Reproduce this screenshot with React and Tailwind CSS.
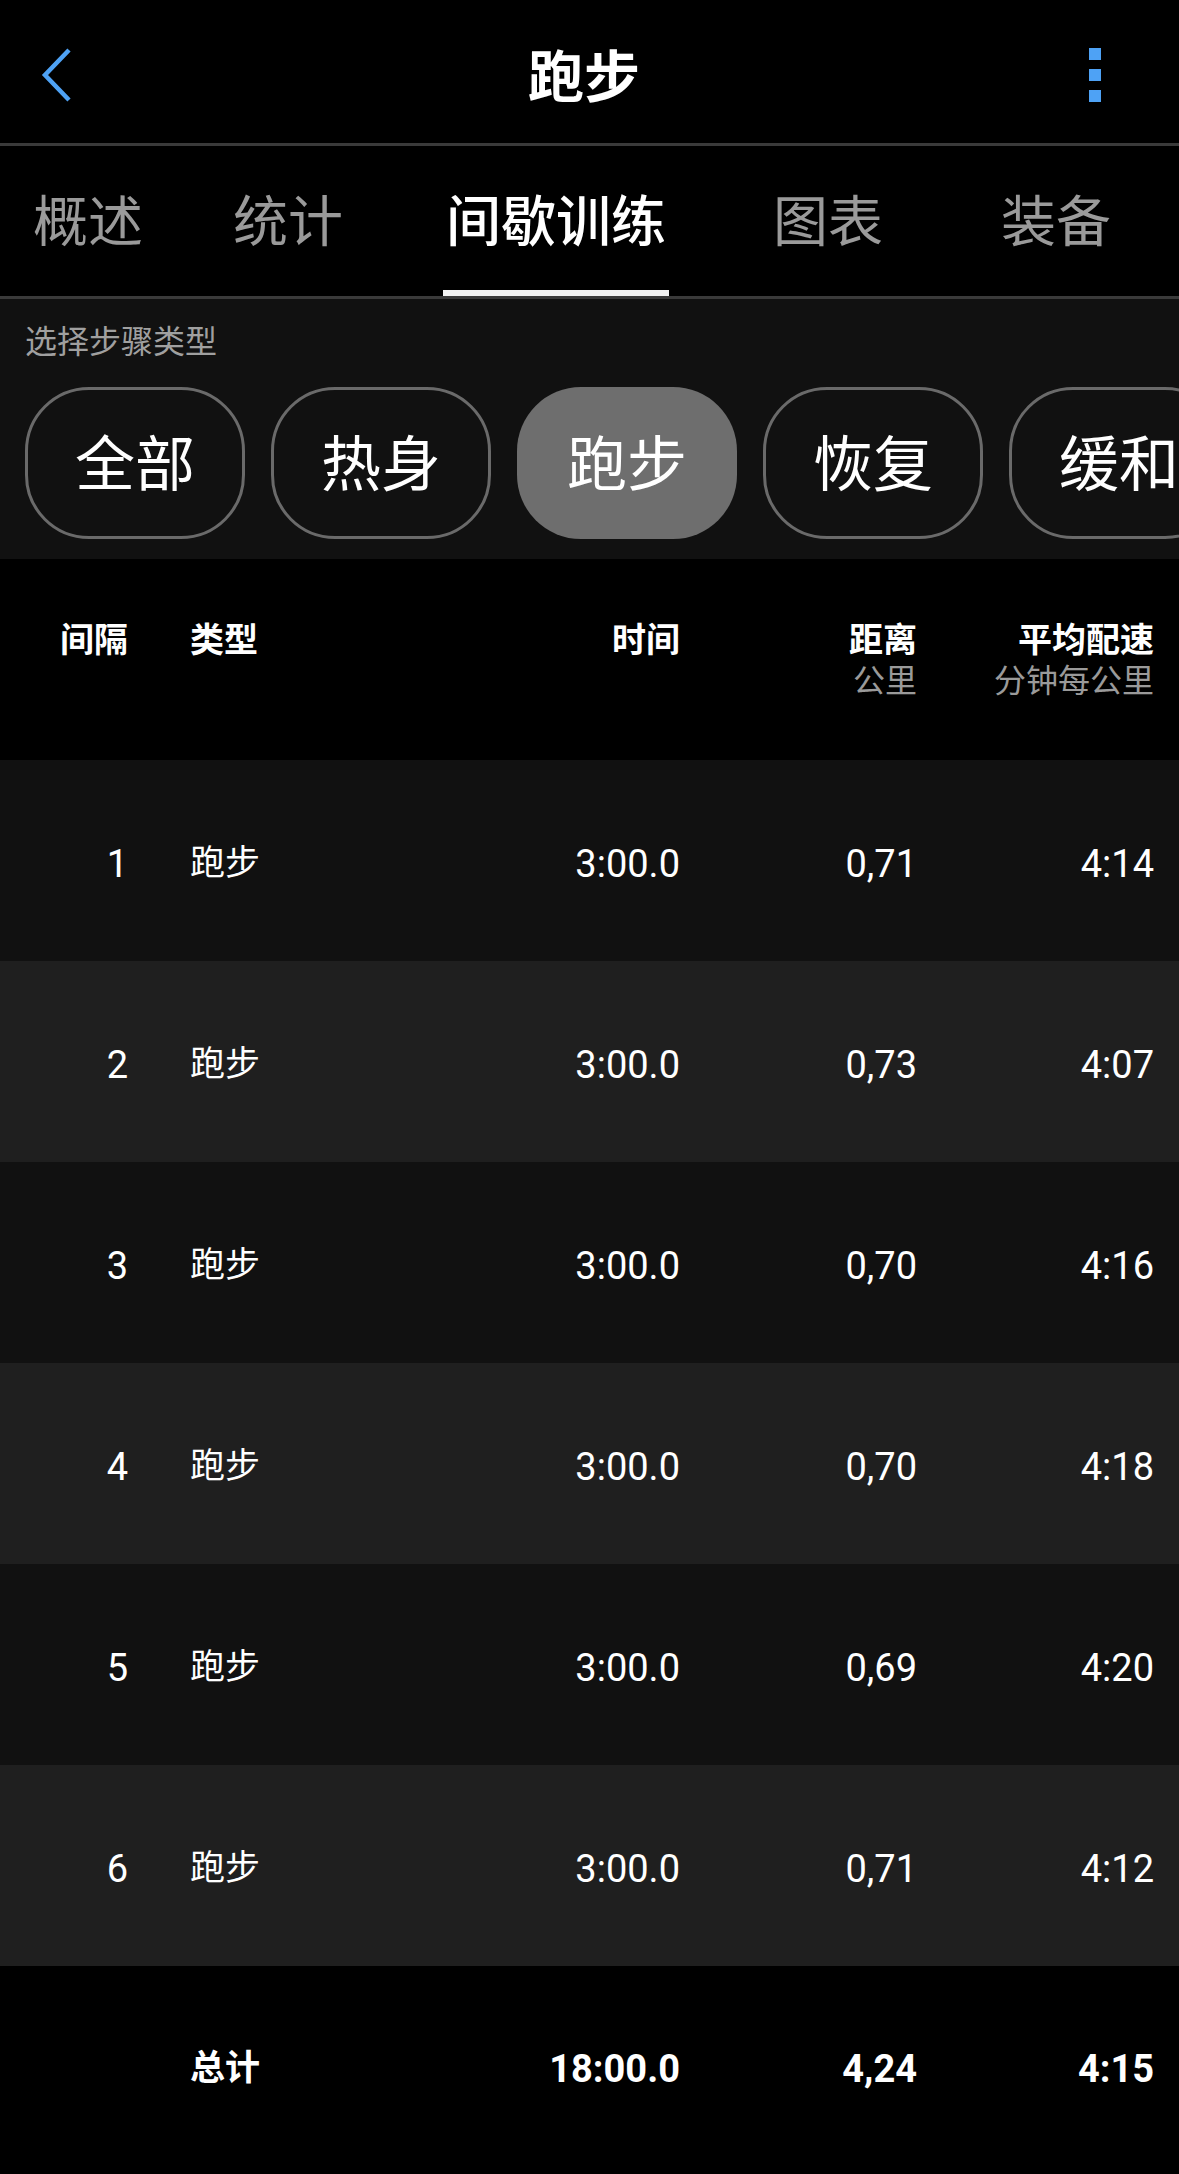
import React from "react";

const tabs = [
  { label: "概述", ml: "ml-[33px]" },
  { label: "统计", ml: "ml-[90px]" },
  { label: "间歇训练", ml: "ml-[103px]", active: true },
  { label: "图表", ml: "ml-[107px]" },
  { label: "装备", ml: "ml-[118px]" },
];

const chips = ["全部", "热身", "跑步", "恢复", "缓和"];

const rows = [
  { n: 1, time: "3:00.0", dist: "0,71", pace: "4:14" },
  { n: 2, time: "3:00.0", dist: "0,73", pace: "4:07" },
  { n: 3, time: "3:00.0", dist: "0,70", pace: "4:16" },
  { n: 4, time: "3:00.0", dist: "0,70", pace: "4:18" },
  { n: 5, time: "3:00.0", dist: "0,69", pace: "4:20" },
  { n: 6, time: "3:00.0", dist: "0,71", pace: "4:12" },
];

const cols = "grid grid-cols-[128px_300px_252px_237px_237px] items-center";

const App = () => {
  return (
    <div className="w-[1179px] min-h-[2174px] bg-black text-white font-['Roboto','Noto_Sans_CJK_SC',sans-serif] overflow-hidden">
      {/* top bar */}
      <div className="h-[143px] flex items-center justify-between px-[40px] pt-[6px]">
        <svg width="32" height="56" viewBox="0 0 32 56" className="ml-[1px]">
          <path d="M28 3 L4 28 L28 53" fill="none" stroke="#4ea2f5" strokeWidth="4.5" />
        </svg>
        <div className="text-[56px] font-bold leading-none pt-[6px] pl-[6px]">跑步</div>
        <div className="flex flex-col gap-[9px] mr-[38px]">
          <div className="w-[12px] h-[12px] bg-[#4ea2f5]" />
          <div className="w-[12px] h-[12px] bg-[#4ea2f5]" />
          <div className="w-[12px] h-[12px] bg-[#4ea2f5]" />
        </div>
      </div>
      <div className="h-[3px] bg-[#3a3a3a]" />

      {/* tabs */}
      <div className="flex h-[150px]">
        {tabs.map(t => (
          <div key={t.label} className={`${t.ml} flex flex-col h-full`}>
            <div className={`flex-1 flex items-center text-[55px] leading-none pt-[9px] ${t.active ? "text-white font-medium" : "text-[#9a9a9a]"}`}>
              {t.label}
            </div>
            <div className={`h-[6px] -mx-[3px] ${t.active ? "bg-[#f2f2f2]" : ""}`} />
          </div>
        ))}
      </div>
      <div className="h-[3px] bg-[#3a3a3a]" />

      {/* step type filter */}
      <div className="bg-[#111111] pt-[23px] pb-[20px]">
        <div className="pl-[25px] text-[32px] leading-[40px] text-[#a0a0a0]">选择步骤类型</div>
        <div className="flex gap-[26px] pl-[25px] mt-[25px] overflow-hidden">
          {chips.map(c => (
            <div key={c}
              className={`shrink-0 w-[220px] h-[152px] rounded-[64px] flex items-center justify-center text-[60px] leading-none pt-[6px] ${
                c === "跑步" ? "bg-[#6e6e6e]" : "border-[3px] border-[#6a6a6a]"
              }`}>
              {c}
            </div>
          ))}
        </div>
      </div>

      {/* table header */}
      <div className={`${cols} h-[201px] text-[34px] font-bold leading-[41px]`}>
        <div className="text-right self-start mt-[61px]">间隔</div>
        <div className="pl-[62px] self-start mt-[61px]">类型</div>
        <div className="text-right self-start mt-[61px]">时间</div>
        <div className="text-right self-start mt-[61px]">
          <div>距离</div>
          <div className="text-[32px] font-normal text-[#9a9a9a]">公里</div>
        </div>
        <div className="text-right self-start mt-[61px]">
          <div>平均配速</div>
          <div className="text-[32px] font-normal text-[#9a9a9a]">分钟每公里</div>
        </div>
      </div>

      {/* intervals */}
      {rows.map((r, i) => (
        <div key={r.n} className={`${cols} h-[201px] pt-[8px] text-[38px] ${i % 2 === 0 ? "bg-[#111111]" : "bg-[#1f1f1f]"}`}>
          <div className="text-right">{r.n}</div>
          <div className="pl-[62px] text-[35px]">跑步</div>
          <div className="text-right">{r.time}</div>
          <div className="text-right">{r.dist}</div>
          <div className="text-right">{r.pace}</div>
        </div>
      ))}

      {/* total */}
      <div className={`${cols} h-[201px] pt-[6px] text-[38px] font-bold`}>
        <div />
        <div className="pl-[62px] text-[35px]">总计</div>
        <div className="text-right">18:00.0</div>
        <div className="text-right">4,24</div>
        <div className="text-right">4:15</div>
      </div>
    </div>
  );
};

export default App;
